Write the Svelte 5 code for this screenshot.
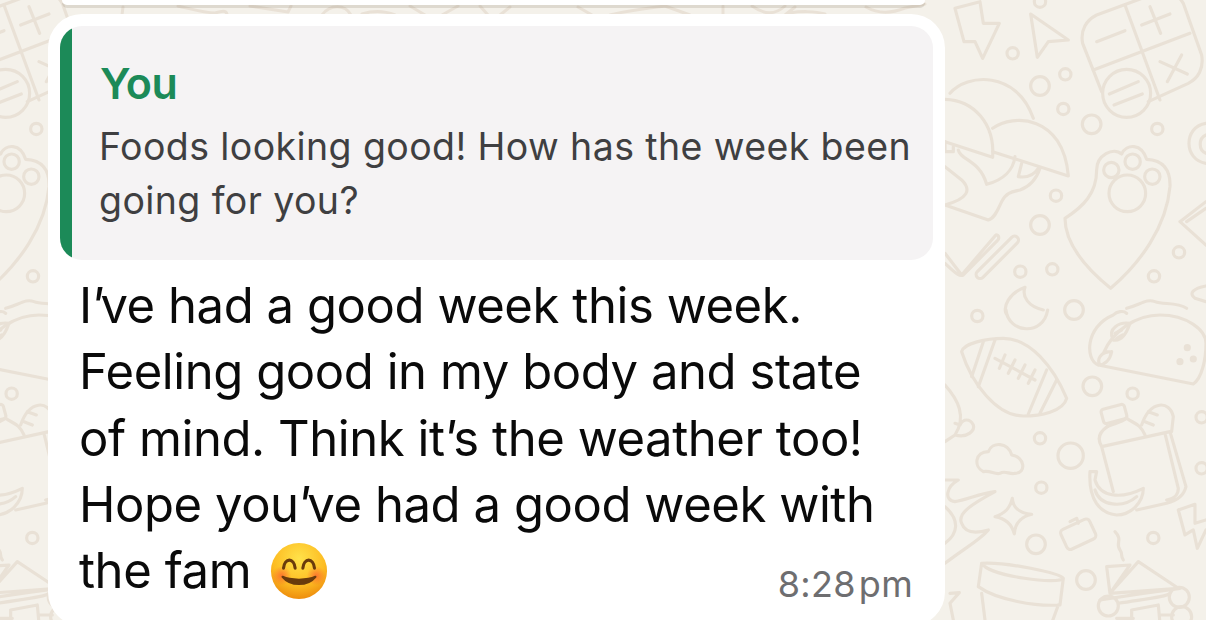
<script>
  const small = [[338,160],[496,223],[490,327],[772,387],[420,5],[468,587],[361,815],[457,808],[762,829],[837,757]];
  const mid = [[420,258],[575,373],[420,675]];
  const small2 = [[232,18],[698,251],[905,322],[905,475],[420,385],[424,533],[760,684]];
  const mid2 = [[522,0],[577,229],[408,703],[558,810]];
</script>

<div class="page">
  <svg class="wallpaper" width="1206" height="620" viewBox="0 0 1206 620" aria-hidden="true">
    <defs>
      <g id="tile" fill="none" stroke="#e9e1d6" stroke-width="9.5" stroke-linecap="round" stroke-linejoin="round">
        <g transform="translate(900 0) scale(.3333)">
          <path d="M165 25L240 5L250 70L298 70L248 175L225 125L192 125Z" />
          <path d="M392 42L505 120L445 125L412 172Z" />
          <path d="M605 275L548 130C540 90 560 60 590 45L780 -25C810 -35 835 -15 850 10L905 165C912 205 895 235 865 250L745 305" />
          <path d="M675 15L780 300M580 210L870 100M590 125L675 92M725 75L810 42M750 20L782 100M780 185L862 222M845 165L802 245" />
          <circle cx="680" cy="280" r="72" />
          <path d="M628 282L715 245M642 315L727 282" />
          <path d="M150 280C200 220 350 210 400 355" />
          <path d="M135 298C220 300 285 370 278 472L135 425" />
          <path d="M278 385C340 340 490 345 505 528L278 455" />
          <path d="M175 450C180 480 240 480 260 553C310 540 340 510 345 470M355 530C385 535 405 520 415 505M365 490L355 530" />
          <path d="M135 500L185 540C215 570 205 595 135 615L265 660C285 655 295 625 305 605C320 575 340 575 360 570C395 558 410 535 420 505" />
          <path d="M135 425V455H160V440" />
          <path d="M590 510C590 465 640 440 665 462C680 430 725 430 740 478C790 480 812 510 810 560C800 680 720 790 632 865C540 790 495 720 495 655C550 620 590 580 590 510Z" />
          <circle cx="634" cy="510" r="23" /><circle cx="698" cy="485" r="23" /><circle cx="757" cy="530" r="23" /><circle cx="682" cy="580" r="55" />
          <path d="M135 760L185 825L285 708C295 698 300 715 292 722L190 825C180 830 172 825 135 790" />
          <rect x="207" y="760" width="170" height="24" rx="12" transform="rotate(-45 292 772)" />
          <path d="M375 862C325 880 310 920 318 940M375 862C365 890 385 920 430 930" />
          <path d="M680 925C720 915 740 895 765 905C790 915 830 905 860 925" />
          <path d="M918 858C880 865 865 880 885 895L918 905" />
          <path d="M918 370C850 380 850 480 918 490M918 405C895 415 895 450 918 460" />
          <path d="M840 665L918 605M860 665L918 625M840 665L918 735" />
          {#each small as [x, y]}<circle cx={x} cy={y} r="17" />{/each}
          {#each mid as [x, y]}<circle cx={x} cy={y} r="28" />{/each}
        </g>
        <g transform="translate(900 310) scale(.3333)">
          <path d="M318 0C325 70 430 80 443 0" />
          <path d="M185 125C190 100 260 85 310 85C390 85 460 170 500 265C490 305 420 318 370 318C290 318 215 220 185 125Z" />
          <path d="M250 95L215 200M285 90L235 230M440 180L385 312M470 210L420 310M285 145L405 210M315 135L298 175M345 150L325 190M375 165L355 205M405 180L385 220" />
          <path d="M595 165C555 150 555 50 640 15C650 5 670 0 680 10M600 165C590 150 600 125 635 125M595 165C615 165 630 150 635 125M610 130C640 60 710 15 780 15C860 15 918 60 918 100C918 150 905 205 880 222L595 165" />
          <path d="M640 90C620 55 660 35 690 40M640 90C665 95 680 70 690 40M645 70L665 60M650 85L668 75" />
          <circle cx="862" cy="113" r="6" fill="#e9e1d6" /><circle cx="840" cy="155" r="6" fill="#e9e1d6" /><circle cx="880" cy="147" r="6" fill="#e9e1d6" />
          <path d="M135 225C175 270 200 320 165 375L135 395M165 340L180 345M165 375C205 385 225 360 220 345C210 325 190 325 180 345" />
          <path d="M605 410L810 365L858 530C850 565 820 575 800 580L710 600M605 410L640 545M795 370L835 535C835 555 825 565 800 570M605 410C590 385 600 365 622 350" />
          <rect x="606" y="290" width="72" height="44" rx="8" transform="rotate(-15 642 312)" />
          <path d="M622 350C640 340 660 340 680 325C700 340 720 340 735 375M725 345C750 270 810 270 820 320L815 365M745 305L772 315M735 335L760 345" />
          <path d="M570 485L590 485L585 510C600 560 660 570 730 535C730 580 690 615 650 615C600 610 565 570 570 485ZM585 540C600 590 670 595 710 560" />
          <rect x="487" y="640" width="95" height="65" rx="12" transform="rotate(-25 535 672)" />
          <path d="M510 635L530 625L535 640" />
          <path d="M645 665C670 690 645 700 660 720C670 735 660 735 670 750" />
          <path d="M250 485C220 470 225 425 265 425C275 395 325 395 335 435C375 440 380 490 345 490C330 495 315 480 300 490C285 495 270 480 250 485Z" />
          <path d="M337 565C340 600 365 610 395 613C365 620 345 640 343 672C335 640 315 625 285 620C315 610 330 595 337 565Z" />
          <path d="M135 510L175 510C140 530 130 570 165 575C200 570 240 550 285 545C220 580 170 610 185 640C195 670 230 670 265 660C240 690 200 710 135 760" />
          <path d="M135 590C180 630 175 670 135 700" />
          <path d="M245 760C320 755 480 790 490 805C480 825 270 800 245 760ZM245 760L235 830C290 870 410 890 480 885L490 805M245 850L255 930M475 885L455 940" />
          <path d="M150 850L178 848L150 880M150 880L160 930" />
          <path d="M620 770L690 765L630 850ZM630 850L715 755L835 835ZM600 870C720 850 800 840 840 835M655 880C750 865 800 860 810 850" />
          <circle cx="625" cy="888" r="30" /><circle cx="838" cy="862" r="30" /><circle cx="845" cy="920" r="30" />
          <path d="M695 900L775 885L780 940M695 900V940M650 925H700M780 915H820" />
          <path d="M835 600L885 583L885 640L918 630M835 600L855 675L880 660L892 715L918 660" />
          {#each small2 as [x, y]}<circle cx={x} cy={y} r="17" />{/each}
          {#each mid2 as [x, y]}<circle cx={x} cy={y} r="28" />{/each}
          <circle cx="512" cy="437" r="38" />
        </g>
      </g>
      <radialGradient id="face" cx="50%" cy="28%" r="78%">
        <stop offset="0" stop-color="#ffe24a" /><stop offset=".6" stop-color="#fdbc22" /><stop offset="1" stop-color="#ea8208" />
      </radialGradient>
      <radialGradient id="blush"><stop offset="0" stop-color="#fb6a30" stop-opacity=".85" /><stop offset="1" stop-color="#fb6a30" stop-opacity="0" /></radialGradient>
    </defs>
    <use href="#tile" />
    <use href="#tile" x="-1121" />
    <g fill="none" stroke="#e9e1d6" stroke-width="3" stroke-linecap="round" stroke-linejoin="round">
      <path d="M123 7L122 15M178 6C195 10 205 13 215 13C222 11 226 10 227 14M250 6L288 12L291 6M322 15C330 4 345 4 351 15M362 14C375 10 385 11 395 15M410 6L425 15M442 15L458 6M480 6L488 15" />
      <path d="M500 15L510 7M578 7L592 15M610 15C630 10 650 8 665 6L690 15M723 6V15M752 6C765 15 775 15 785 6M785 15L795 7M790 13C800 11 815 11 825 14M866 7C880 15 895 12 905 8L925 4" />
    </g>
  </svg>

  <div class="prev"></div>

  <article class="bubble">
    <div class="quote">
      <div class="bar"></div>
      <div class="quote-text">
        <div class="author">You</div>
        <p class="quoted">Foods looking good! How has the week been<br />going for you?</p>
      </div>
    </div>
    <div class="message">
      <p class="body"><span class="tight">I</span><span class="ap">'</span>ve had a good week this week.<br />Feeling good in my body and state<br />of mind. Think i<span class="tight">t</span><span class="ap">'</span>s the weather too!<br />Hope yo<span class="tight">u</span><span class="ap">'</span>ve had a good week with</p>
      <div class="last">
        <span class="fam">the fam
          <svg class="emoji" width="60" height="60" viewBox="0 0 60 60" aria-hidden="true">
            <circle cx="30" cy="30" r="29" fill="url(#face)" />
            <circle cx="12" cy="35" r="10" fill="url(#blush)" /><circle cx="48" cy="35" r="10" fill="url(#blush)" />
            <path d="M14 27C15 16 25 16 26 27M34 27C35 16 45 16 46 27" fill="none" stroke="#6a3b0c" stroke-width="3.2" stroke-linecap="round" />
            <path d="M13 36C21 46 39 46 47 36C39 40 21 40 13 36Z" fill="#6a3b0c" stroke="#6a3b0c" stroke-width="2.2" stroke-linejoin="round" />
          </svg>
        </span>
        <time class="time">8:28<span class="ampm">pm</span></time>
      </div>
    </div>
  </article>
</div>

<style>
  :global(body) { margin: 0; }
  .page {
    position: relative;
    width: 1206px;
    height: 620px;
    overflow: hidden;
    background: #f4f1ea;
    font-family: Inter, "Liberation Sans", sans-serif;
  }
  .wallpaper { position: absolute; inset: 0; }
  .prev {
    position: relative;
    height: 5px;
    margin: 0 281px 0 62px;
    background: #fff;
    border-radius: 0 0 22px 22px;
    box-shadow: 0 3px 0 rgba(120, 110, 90, .18);
  }
  .bubble {
    position: relative;
    box-sizing: border-box;
    width: 897px;
    margin: 9px 0 0 48px;
    padding: 12px 12px 0;
    background: #fff;
    border-radius: 34px;
  }
  .quote {
    display: flex;
    height: 234px;
    overflow: hidden;
    background: #f5f3f4;
    border-radius: 22px;
  }
  .bar { flex: none; width: 12px; background: #1c8a58; }
  .quote-text { padding: 34px 0 0 28px; min-width: 0; }
  .author {
    color: #1c8a58;
    font-size: 43px;
    font-weight: 600;
    line-height: 46px;
    letter-spacing: -.6px;
  }
  .quoted {
    margin: 14px 0 0 -1px;
    color: #3f3f41;
    font-size: 37.5px;
    line-height: 54px;
    letter-spacing: .4px;
    white-space: nowrap;
  }
  .message { padding: 13px 20px 22px 19px; color: #0a0a0a; }
  .body, .last {
    margin: 0;
    font-size: 49px;
    line-height: 66.3px;
    white-space: nowrap;
    letter-spacing: -.43px;
  }
  .tight { letter-spacing: -3px; }
  .ap { font-style: italic; letter-spacing: -3.5px; }
  .last { display: flex; justify-content: space-between; align-items: flex-end; }
  .fam { display: inline-flex; align-items: center; gap: 19px; }
  .emoji { width: 58px; height: 58px; }
  .time {
    color: #6e6e70;
    font-size: 36px;
    line-height: 40px;
    letter-spacing: .3px;
  }
  .ampm { margin-left: 3px; }
</style>
